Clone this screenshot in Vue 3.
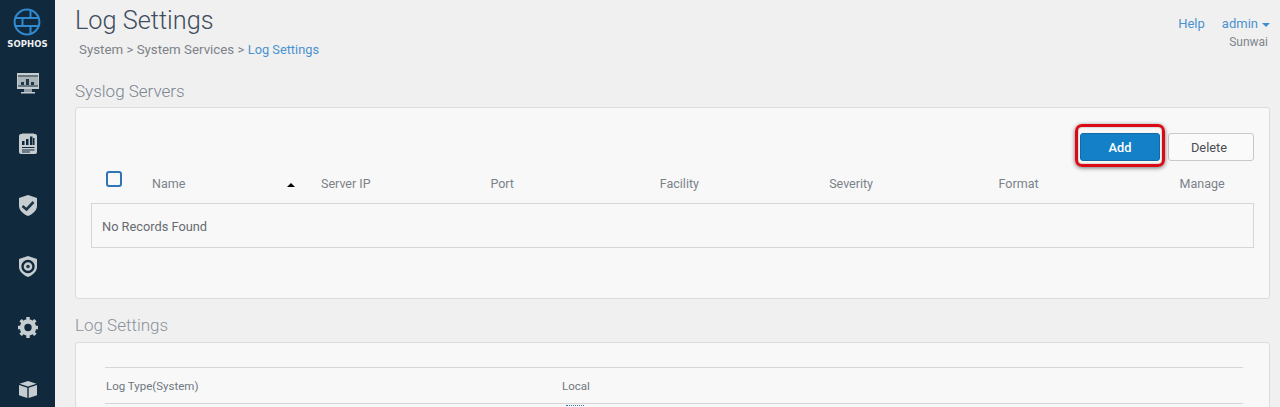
<script setup>
const cols = [
  { label: 'Name', cls: 'c-name' },
  { label: 'Server IP', cls: 'c-mid' },
  { label: 'Port', cls: 'c-mid' },
  { label: 'Facility', cls: 'c-mid' },
  { label: 'Severity', cls: 'c-mid' },
  { label: 'Format', cls: 'c-format' },
  { label: 'Manage', cls: 'c-manage' }
]
</script>

<template>
  <div class="app">
    <aside class="side">
      <div class="logo">
        <svg width="28" height="28" viewBox="0 0 28 28" fill="none" stroke="#2f8ad0" stroke-width="2">
          <circle cx="14" cy="14" r="12.4" />
          <path d="M2 10H26M2 18H26M17.500 2V10M9.500 10V18M17.500 18V26" />
        </svg>
        <span class="brand">SOPHOS</span>
      </div>
      <nav class="nav">
        <svg width="22" height="21" viewBox="0 0 22 21">
          <path fill="#c5cdd1" d="M0 0H22V16H0Z" />
          <path fill="#67767e" d="M1 2H21V4H1ZM1 12H21V14H1Z" />
          <path fill="#a9b3b8" d="M1 4H21V12H1Z" />
          <path fill="#22384a" d="M4 9H7V12H4ZM9 6H12V12H9ZM14 9H17V12H14Z" />
          <path fill="#8f9ba1" d="M7 16H15V19H7Z" />
          <path fill="#c5cdd1" d="M4 19H18V20.500H4Z" />
        </svg>
        <svg width="18" height="22" viewBox="0 0 18 22">
          <path fill="#c5cdd1" d="M2 1H16Q18 1 18 3V19Q18 21 16 21H2Q0 21 0 19V3Q0 1 2 1Z" />
          <path fill="#6b7a82" d="M3 0H15V1H3Z" />
          <path fill="#11293c" d="M3 8H5.500V12H3ZM7 6H9.500V12H7ZM11 3.500H13.500V12H11ZM14 5H15.500V12H14ZM3 14H15.500V15H3ZM3 16.500H15.500V17.500H3ZM3 18.500H11V19.500H3Z" />
        </svg>
        <svg width="18" height="21" viewBox="0 0 18 21">
          <path fill="#c5cdd1" d="M9 0L18 3V11C18 15 14 19 9 21C4 19 0 15 0 11V3Z" />
          <path fill="none" stroke="#1d3346" stroke-width="2.600" d="M3.500 11L7.500 14.500L14.500 7" />
        </svg>
        <svg width="18" height="21" viewBox="0 0 18 21">
          <path fill="#c5cdd1" d="M9 0L18 3V11C18 15 14 19 9 21C4 19 0 15 0 11V3Z" />
          <circle cx="9" cy="10.500" r="5.500" fill="none" stroke="#11293c" stroke-width="2.400" />
          <circle cx="9" cy="10.500" r="3" fill="#c5cdd1" />
          <circle cx="9" cy="10.500" r="1.800" fill="#22384a" />
        </svg>
        <svg width="20" height="21" viewBox="0 0 20 21">
          <circle cx="10" cy="10.500" r="6" fill="none" stroke="#c5cdd1" stroke-width="4.600" />
          <path stroke="#c5cdd1" stroke-width="3.400" d="M10 0V3M10 18V21M2.600 3.100L4.700 5.200M15.300 15.800L17.400 17.900M2.600 17.900L4.700 15.800M15.300 5.200L17.400 3.100M0 10.500H3M17 10.500H20" />
        </svg>
        <svg width="18" height="17" viewBox="0 0 18 17">
          <path fill="#c5cdd1" d="M9 0L17.500 2.800L9 5.600L.5 2.800Z" />
          <path fill="#c5cdd1" d="M0 4L8.300 6.800V17L0 14.300Z" />
          <path fill="#c5cdd1" d="M18 4L9.700 6.800V17L18 14.300Z" />
        </svg>
      </nav>
    </aside>

    <main class="main">
      <header class="top">
        <div>
          <h1 class="title">Log Settings</h1>
          <div class="crumbs">System &gt; System Services &gt; <a class="link crumb-link">Log Settings</a></div>
        </div>
        <div class="user">
          <div class="user-links">
            <a class="link">Help</a>
            <a class="link admin">admin <i class="caret"></i></a>
          </div>
          <div class="org">Sunwai</div>
        </div>
      </header>

      <h2 class="section">Syslog Servers</h2>
      <section class="panel first">
        <div class="actions">
          <span class="add-wrap">
            <button class="btn primary">Add</button>
          </span>
          <button class="btn ghost">Delete</button>
        </div>
        <div class="thead">
          <span class="check"></span>
          <span v-for="c in cols" :key="c.label" :class="['th', c.cls]">
            {{ c.label }}
            <i v-if="c.label === 'Name'" class="sort"></i>
          </span>
        </div>
        <div class="empty">No Records Found</div>
      </section>

      <h2 class="section second">Log Settings</h2>
      <section class="panel last">
        <div class="logrow">
          <span class="log-type">Log Type(System)</span>
          <span class="log-local">Local</span>
        </div>
        <div class="dots"></div>
      </section>
    </main>
  </div>
</template>

<style>
html, body { margin: 0; height: 100%; overflow: hidden; background: #f0f0f0; }
</style>

<style scoped>
.app {
  display: flex;
  height: 407px;
  overflow: hidden;
  background: #f0f0f0;
  font-family: Roboto, "Liberation Sans", sans-serif;
  color: #6f7780;
}
.side {
  flex: 0 0 55px;
  background: #11293c;
  display: flex;
  flex-direction: column;
  align-items: center;
}
.logo {
  display: flex;
  flex-direction: column;
  align-items: center;
  padding-top: 8px;
}
.brand {
  font-family: "DejaVu Sans", sans-serif;
  font-size: 8.500px;
  font-weight: 700;
  line-height: 10px;
  letter-spacing: .1px;
  color: #eef1f3;
  margin-top: 3px;
}
.nav {
  display: flex;
  flex-direction: column;
  align-items: center;
  padding-top: 24px;
}
.nav svg:nth-child(1) { margin-bottom: 39px; }
.nav svg:nth-child(2) { margin-bottom: 40px; }
.nav svg:nth-child(3) { margin-bottom: 40px; }
.nav svg:nth-child(4) { margin-bottom: 40px; }
.nav svg:nth-child(5) { margin-bottom: 43px; }
.main {
  flex: 1;
  min-width: 0;
  padding: 0 10px 0 20px;
}
.top {
  display: flex;
  justify-content: space-between;
  height: 80px;
}
.title {
  margin: 6px 0 0;
  font-size: 25.300px;
  line-height: 30px;
  font-weight: 300;
  color: #3f4d5e;
}
.crumbs {
  margin: 6px 0 0 4px;
  font-size: 13.300px;
  line-height: 16px;
  color: #7d8288;
}
.crumb-link { font-size: 12.800px; }
.link { color: #4a92cf; }
.user {
  padding-top: 16px;
  text-align: right;
  font-size: 13px;
  line-height: 16px;
}
.user-links { display: flex; gap: 17px; }
.admin { display: inline-flex; align-items: center; gap: 4px; }
.caret {
  width: 0;
  height: 0;
  border: 4px solid transparent;
  border-top: 4px solid #3d8ed0;
  border-bottom: 0;
  margin-top: 1px;
}
.org { margin-top: 2px; font-size: 12px; color: #80868c; padding-right: 2px; }
.section {
  margin: 0;
  font-size: 17px;
  line-height: 22px;
  font-weight: 300;
  color: #7c8590;
}
.second { margin-top: 15px; color: #8a929b; }
.panel {
  margin-top: 6px;
  box-sizing: border-box;
  background: #f8f8f8;
  border: 1px solid #dcdcdc;
  border-radius: 3px;
}
.first { height: 192px; padding: 25px 15px 0; margin-top: 5px; }
.actions {
  display: flex;
  justify-content: flex-end;
  align-items: center;
  gap: 8px;
  height: 28px;
}
.btn {
  box-sizing: border-box;
  font-family: inherit;
  font-size: 13px;
  border-radius: 3px;
  padding: 0;
  height: 28px;
}
.add-wrap { position: relative; display: inline-flex; }
.add-wrap::before {
  content: "";
  position: absolute;
  left: -5px;
  top: -9px;
  right: -5px;
  bottom: -6px;
  border: 3px solid #dc0a14;
  border-radius: 7px;
  box-shadow: 0 1px 4px rgba(0, 0, 0, .55), inset 0 0 2px rgba(0, 0, 0, .4);
  pointer-events: none;
}
.primary {
  width: 80px;
  background: #1480c8;
  color: #fff;
  font-size: 12.800px;
  font-weight: 500;
  border: 1px solid #106ba8;
}
.ghost {
  width: 86px;
  background: #fafafa;
  color: #4a4f55;
  border: 1px solid #c8c8c8;
  padding-right: 4px;
  font-size: 12.800px;
}
.thead {
  display: flex;
  align-items: center;
  height: 42px;
  font-size: 12.500px;
  padding-top: 2px;
  box-sizing: border-box;
}
.check {
  box-sizing: border-box;
  flex: none;
  width: 16px;
  height: 16px;
  margin: -9px 0 0 15px;
  border: 2px solid #2d75b5;
  border-radius: 3px;
  background: #f8f8f8;
}
.th { display: block; position: relative; color: #7b8289; }
.c-name { margin-left: 30px; width: 169px; }
.c-mid { width: 169.400px; }
.c-format { width: 181px; }
.sort {
  position: absolute;
  left: 135px;
  top: 7px;
  width: 0;
  height: 0;
  border: 4px solid transparent;
  border-bottom: 4px solid #000;
  border-top: 0;
}
.empty {
  box-sizing: border-box;
  height: 45px;
  border: 1px solid #d6d6d6;
  padding: 1px 10px 0;
  display: flex;
  align-items: center;
  font-size: 12.800px;
  color: #666b70;
  background: #f8f8f8;
}
.last {
  height: 80px;
  padding: 24px 26px 0 29px;
}
.logrow {
  display: flex;
  align-items: center;
  height: 35px;
  border-top: 1px solid #d6d6d6;
  border-bottom: 1px solid #d6d6d6;
  font-size: 11.500px;
  color: #6f7780;
}
.log-type { width: 456px; padding-left: 1px; }
.dots {
  width: 18px;
  margin: 1px 0 0 461px;
  border-top: 1px dotted #2d75b5;
}
</style>
